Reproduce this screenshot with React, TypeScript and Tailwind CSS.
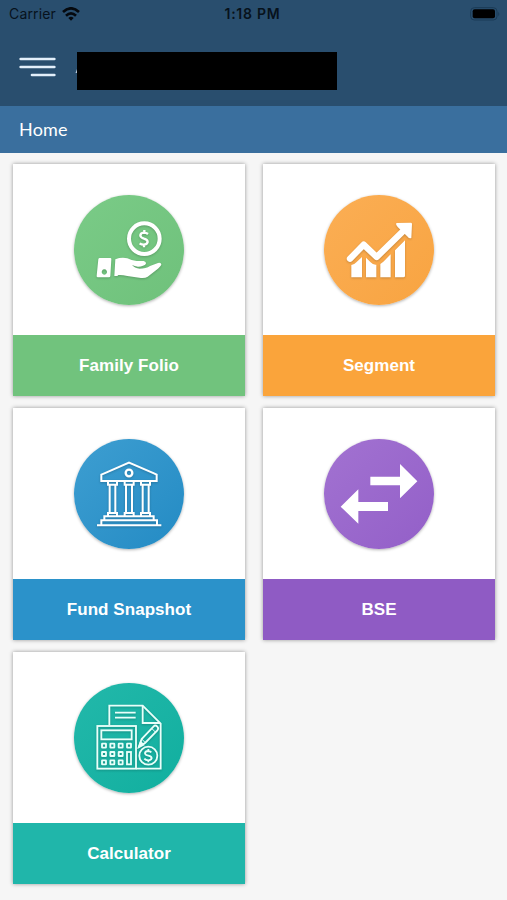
import type { ReactNode } from 'react';
import clsx from 'clsx';

type TileProps = {
  label: string;
  labelClass: string;
  circleClass: string;
  icon: ReactNode;
};

const WifiIcon = () => (
  <svg viewBox="0 0 54 42" className="ml-1.5 h-3.5 w-[18px]">
    <g fill="none" stroke="#05090e" strokeWidth="8">
      <path d="M3 15 Q27 -7 51 15" />
      <path d="M12 26 Q27 12 42 26" />
    </g>
    <path d="M19 33 Q27 26 35 33 L27 41Z" fill="#05090e" />
  </svg>
);

const BatteryIcon = () => (
  <svg viewBox="0 0 90 42" className="h-3.5 w-[30px]">
    <rect
      x="2"
      y="2"
      width="79"
      height="37"
      rx="11"
      fill="none"
      stroke="#1b3b56"
      strokeWidth="3"
    />
    <rect x="8" y="7" width="67" height="27" rx="6" fill="#000" />
    <path d="M85 14 Q91 21 85 28Z" fill="#1b3b56" />
  </svg>
);

const MenuIcon = () => (
  <svg viewBox="0 0 111 60" className="h-5 w-[37px]">
    <g stroke="#e3effa" strokeWidth="8" strokeLinecap="round">
      <path d="M5 6H106M5 30H106M39 54H106" />
    </g>
  </svg>
);

const iconClass = 'size-full drop-shadow-[0_1px_1px_rgba(0,0,0,0.2)]';

const HandMoneyIcon = () => (
  <svg viewBox="30 30 330 330" className={iconClass}>
    <circle cx="241" cy="161" r="46" fill="none" stroke="#fff" strokeWidth="12" />
    <path
      d="M252 147 Q247 143 239 143 Q229 144 229 152 Q230 158 240 161 Q251 164 251 171 Q249 179 239 179 Q232 179 227 175 M241 135V143 M240 179V187"
      fill="none"
      stroke="#fff"
      strokeWidth="7"
    />
    <path
      d="M107 219 H139 Q142 219 142 223 L139 273 Q139 277 134 277 H101 Q97 276 98 272 L103 223 Q104 219 107 219Z M121 253 a8 8 0 1 0 .1 0Z"
      fill="#fff"
      fillRule="evenodd"
    />
    <path
      d="M154 223 Q172 216 190 220 Q202 226 218 228 L239 228 Q247 230 246 236 Q240 244 222 245 Q212 244 204 240 Q211 249 227 251 Q246 251 258 243 L282 234 Q291 232 292 238 Q291 244 276 256 L251 275 Q244 280 231 279 L190 273 Q175 269 163 270 L160 273 H151Z"
      fill="#fff"
    />
  </svg>
);

const GrowthIcon = () => (
  <svg viewBox="30 30 330 330" className={iconClass}>
    <path
      d="M108 221 L149 179 L188 216 L270 136"
      fill="none"
      stroke="#fff"
      strokeWidth="19"
      strokeLinecap="round"
      strokeLinejoin="round"
    />
    <path
      d="M247 114 L290 113 Q294 113 294 117 L292 159 Q286 162 281 155 L251 126 Q244 119 247 114Z"
      fill="#fff"
    />
    <path
      d="M112 240 Q120 240 127 232 L144 216 V277 H112Z M156 218 L170 232 Q177 240 187 239 V277 H156Z M199 237 L208 230 L230 208 V277 H199Z M243 196 L273 166 V272 Q273 277 268 277 H243Z"
      fill="#fff"
    />
  </svg>
);

const BankIcon = () => (
  <svg viewBox="30 27 330 330" className={iconClass}>
    <g fill="none" stroke="#fff" strokeWidth="6">
      <path d="M112 134 L121 130 L195 98 L270 130 L278 134 V153 H112Z" />
      <circle cx="195" cy="129" r="10" strokeWidth="7" />
      <path d="M132 155 V164 H159 V155 M182 155 V164 H209 V155 M231 155 V164 H258 V155" />
      <path d="M137 165V248M154 165V248M186 165V248M204 165V248M236 165V248M254 165V248" />
      <path d="M132 258 V249 H159 V258 M182 258 V249 H209 V258 M231 258 V249 H258 V258" />
      <path d="M121 270 V259 H269 V270 M112 283 V271 H279 V283 M99 286 H292" />
    </g>
  </svg>
);

const TransferIcon = () => (
  <svg viewBox="30 27 330 330" className="size-full">
    <path
      d="M169 140 H258 V102 L310 154 L258 205 V166 H169Z M222 216 V243 H133 V281 L80 230 L133 178 V216Z"
      fill="#fff"
    />
  </svg>
);

const keys = [
  [114, 212], [139, 212], [164, 212], [189, 212],
  [114, 237], [139, 237], [164, 237],
  [114, 262], [139, 262], [164, 262],
];

const CalculatorIcon = () => (
  <svg viewBox="30 30 330 330" className={iconClass}>
    <g fill="none" stroke="#e9fffa" strokeWidth="5.5">
      <path d="M136 157 V98 H236 L290 152 V287 H217" />
      <path d="M236 98 V150 H288" />
      <path d="M153 119 H215 M153 134 H215" />
      <rect x="100" y="159" width="116" height="128" />
      <rect x="112" y="172" width="91" height="27" />
      {keys.map(([x, y]) => (
        <rect key={`${x}-${y}`} x={x} y={y} width="12" height="12" rx="1" />
      ))}
      <rect x="189" y="237" width="12" height="37" />
      <path d="M225 221 L233 198 L269 160 Q274 155 280 161 Q285 166 280 172 L244 209Z" />
      <path d="M233 198 L244 209 M263 166 L275 178" strokeWidth="3" />
      <path d="M225 222 L230 207 L238 215Z" fill="#e9fffa" />
      <circle cx="253" cy="248" r="27" />
      <path d="M262 238 Q258 234 252 234 Q243 235 243 241 Q244 246 253 248 Q263 250 263 256 Q261 262 253 262 Q245 262 241 257 M253 228V234M253 262V268" />
    </g>
  </svg>
);

const tiles: TileProps[] = [
  {
    label: 'Family Folio',
    labelClass: 'bg-[#71c37d]',
    circleClass: 'from-[#7acb87] to-[#6fc17b]',
    icon: <HandMoneyIcon />,
  },
  {
    label: 'Segment',
    labelClass: 'bg-[#faa43b]',
    circleClass: 'from-[#fbae54] to-[#f8a441]',
    icon: <GrowthIcon />,
  },
  {
    label: 'Fund Snapshot',
    labelClass: 'bg-[#2b92ca]',
    circleClass: 'from-[#3d9ed1] to-[#238bc4]',
    icon: <BankIcon />,
  },
  {
    label: 'BSE',
    labelClass: 'bg-[#8f5bc4]',
    circleClass: 'from-[#a272d1] to-[#935fc8]',
    icon: <TransferIcon />,
  },
  {
    label: 'Calculator',
    labelClass: 'bg-[#20b6aa]',
    circleClass: 'from-[#22b8aa] to-[#10af9f]',
    icon: <CalculatorIcon />,
  },
];

const Tile = ({ label, labelClass, circleClass, icon }: TileProps) => (
  <div className="flex h-[232px] flex-col bg-white shadow-[0_0_4px_rgba(0,0,0,0.4)]">
    <div className="flex h-[171px] justify-center pt-[31px]">
      <div
        className={clsx(
          'size-[110px] rounded-full bg-linear-to-br shadow-[0_1px_3px_rgba(0,0,0,0.3)]',
          circleClass,
        )}
      >
        {icon}
      </div>
    </div>
    <div
      className={clsx(
        'flex flex-1 items-center justify-center pt-px text-[17px] font-bold tracking-[0.05px] text-white',
        labelClass,
      )}
    >
      {label}
    </div>
  </div>
);

export default function App() {
  return (
    <div className="h-[900px] w-[507px] overflow-hidden bg-[#f6f6f6] font-['Liberation_Sans',sans-serif]">
      <header className="h-[106px] bg-[#294e6e]">
        <div className="grid h-7 grid-cols-3 items-center pr-[7px] pb-px pl-[9px] font-[Inter,sans-serif] text-[14px] text-[#07121c]">
          <div className="flex items-center tracking-[0.15px]">
            Carrier
            <WifiIcon />
          </div>
          <div className="pr-1 text-center font-semibold tracking-[0.75px]">
            1:18 PM
          </div>
          <div className="flex justify-end">
            <BatteryIcon />
          </div>
        </div>
        <div className="flex pl-[19px]">
          <div className="pt-[29px]">
            <MenuIcon />
          </div>
          <svg viewBox="0 0 6 36" className="mt-6 ml-[18px] h-9 w-[3px]">
            <path d="M3 24 L6 16 V24Z" fill="#b9cbdc" />
          </svg>
          <div className="mt-6 h-[38px] w-[260px] bg-black" />
        </div>
      </header>
      <div className="flex h-[47px] items-center bg-[#3a6f9e] pl-[19px] font-[Lato,sans-serif] text-[18px] tracking-[0.2px] text-white">
        Home
      </div>
      <main className="grid grid-cols-2 gap-x-[18px] gap-y-3 pt-[11px] pr-3 pl-[13px]">
        {tiles.map((tile) => (
          <Tile key={tile.label} {...tile} />
        ))}
      </main>
    </div>
  );
}
